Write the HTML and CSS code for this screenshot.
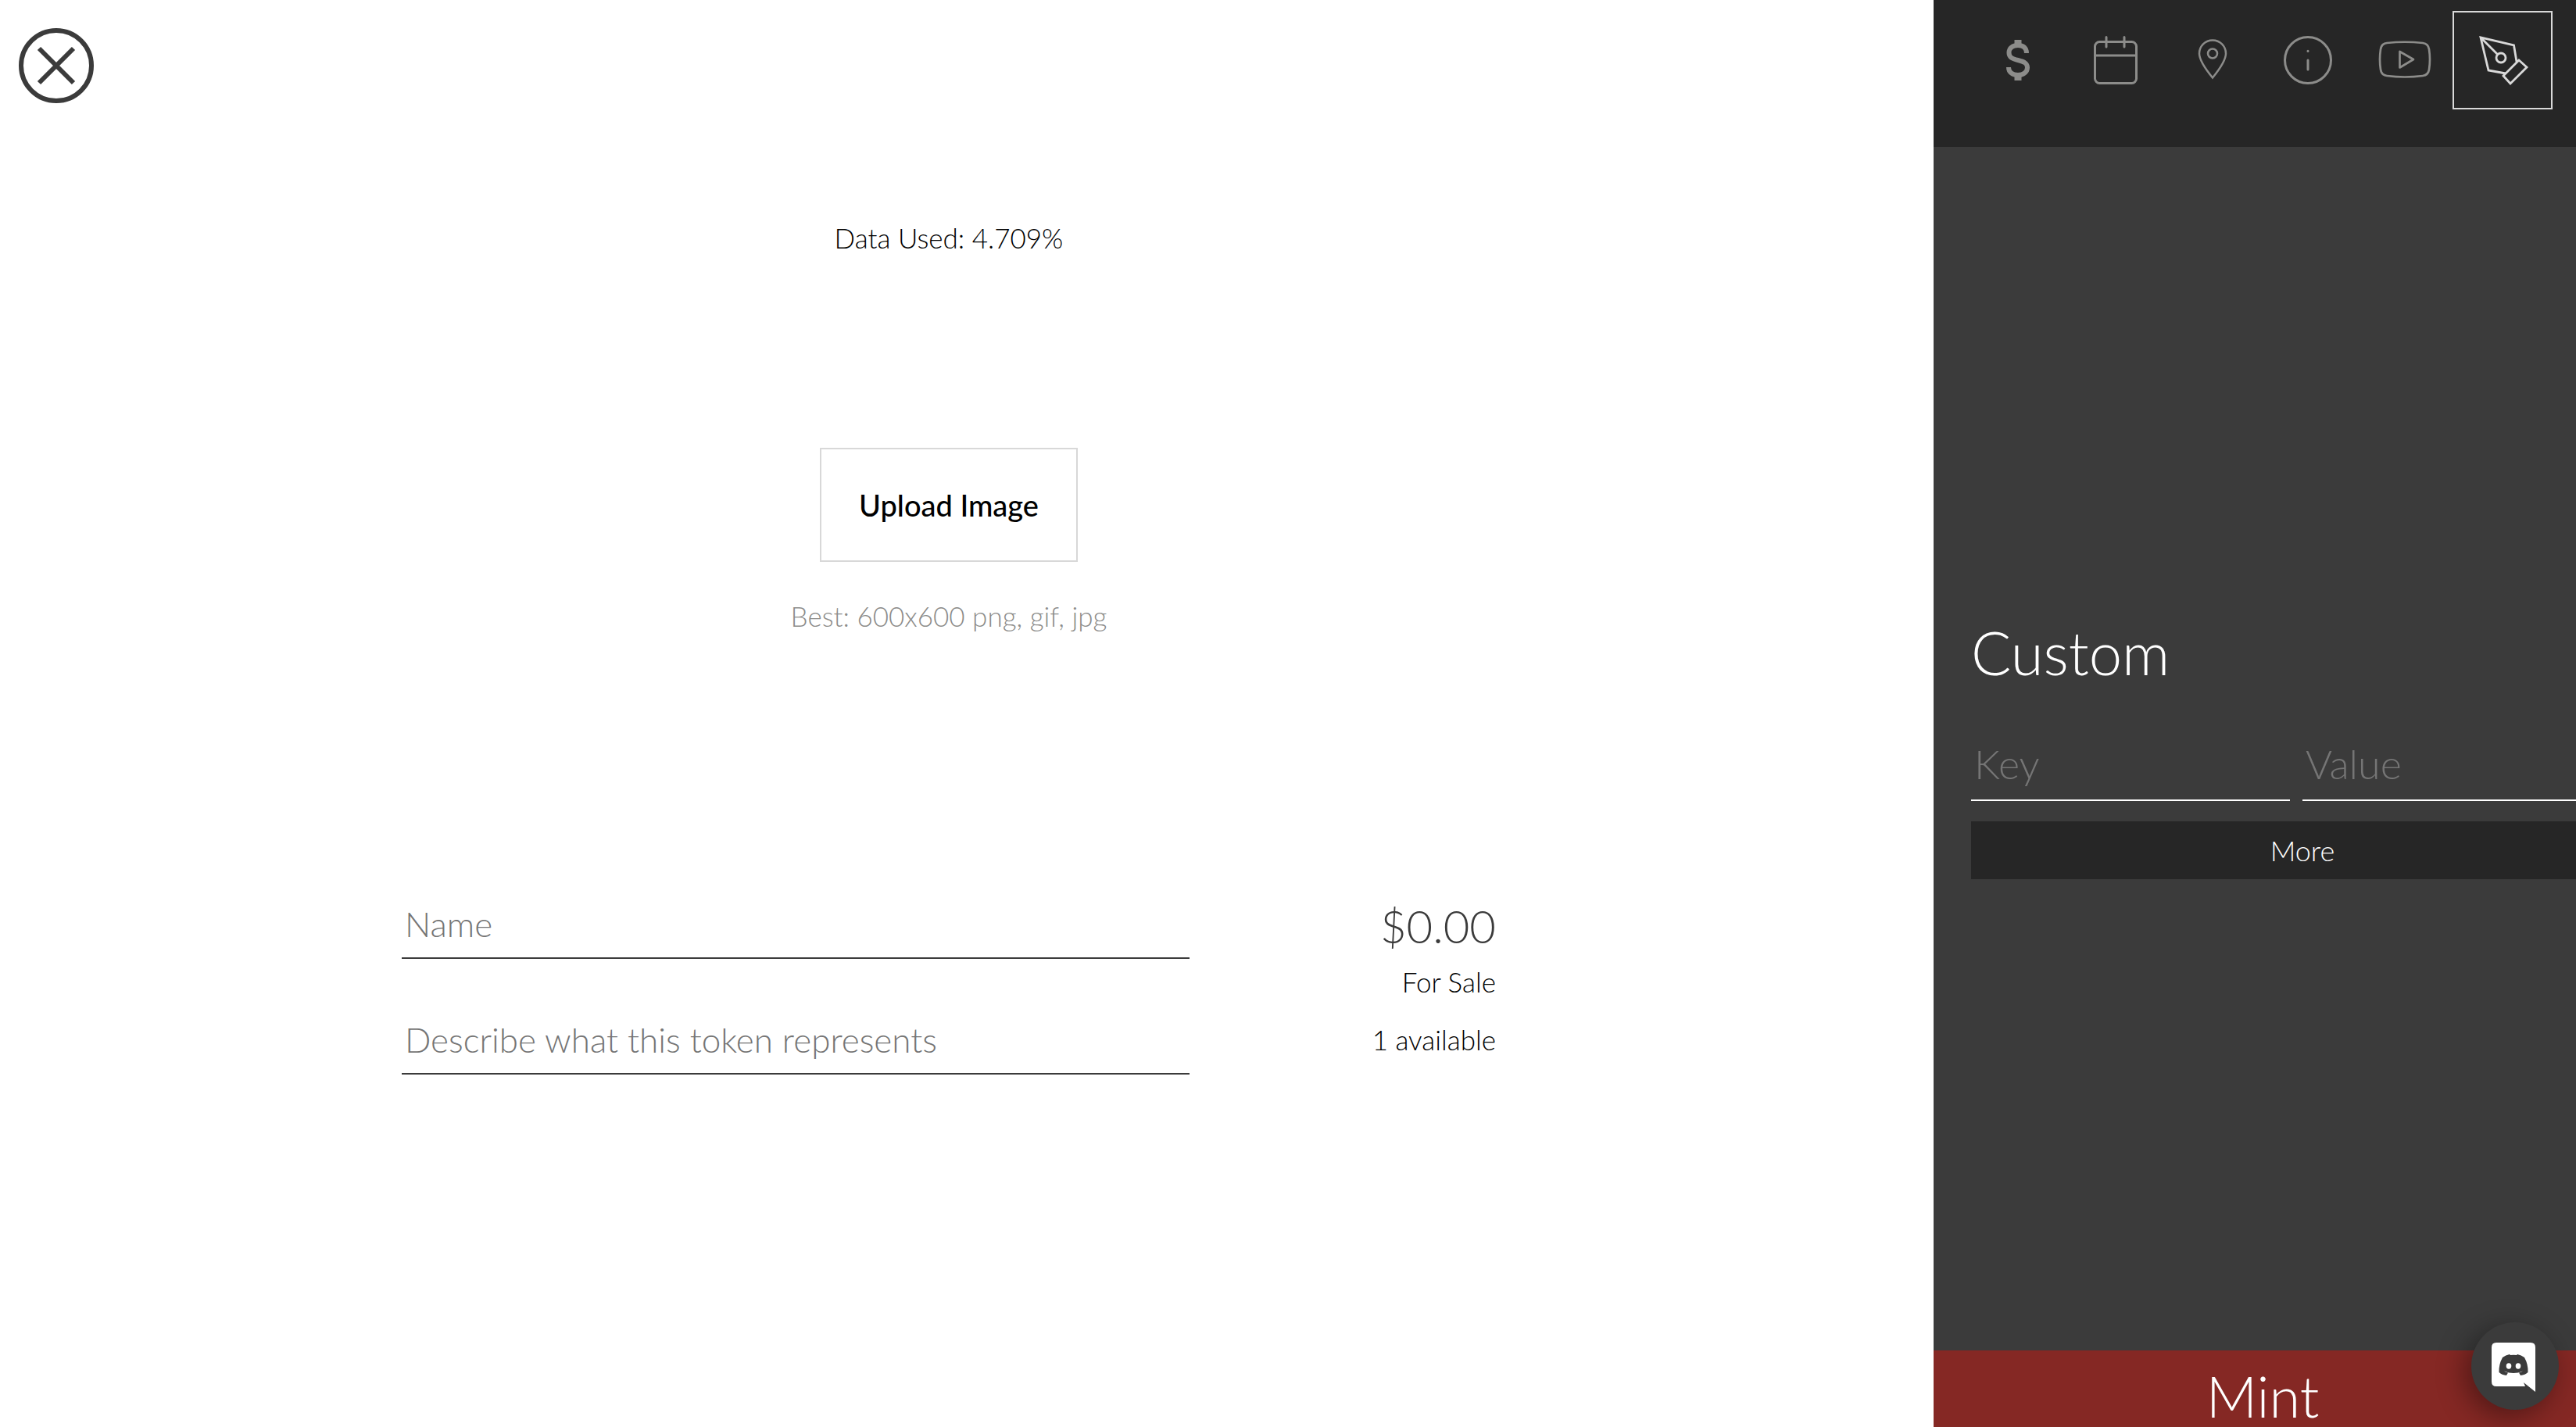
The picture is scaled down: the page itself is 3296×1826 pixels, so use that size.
FILE: index.html
```html
<!DOCTYPE html>
<html lang="en">
<head>
<meta charset="utf-8">
<title>Mint a token</title>
<link rel="stylesheet" href="styles.css">
</head>
<body>
<div class="page">
  <main class="main">
    <button class="close" type="button" aria-label="Close">
      <svg viewBox="0 0 96 96" width="96" height="96" fill="none" stroke="currentColor" stroke-width="6">
        <circle cx="48" cy="48" r="45"/>
        <path d="M26 26 70 70M70 26 26 70"/>
      </svg>
    </button>
    <form class="token">
      <p class="note">Data Used: 4.709%</p>
      <button class="upload" type="button">Upload Image</button>
      <p class="note note-muted">Best: 600x600 png, gif, jpg</p>
      <div class="details">
        <div class="fields">
          <input class="field" type="text" placeholder="Name" aria-label="Name">
          <input class="field" type="text" placeholder="Describe what this token represents" aria-label="Description">
        </div>
        <div class="sale">
          <p class="price">$0.00</p>
          <p class="note">For Sale</p>
          <p class="note stock">1 available</p>
        </div>
      </div>
    </form>
  </main>

  <aside class="sidebar">
    <nav class="tabs">
      <button class="tab" type="button" aria-label="Price">
        <svg viewBox="-42 -40 80 80" fill="none" stroke="currentColor" stroke-width="6">
          <path d="M11-9C11-15.500 7-19 0-19S-11.500-15.500-11.500-9.500C-11.500-4-8-2 0 0S12 4 12 9.500 7 19 0 19-12 15.500-12 9"/>
          <path stroke-width="9" d="M0-26V-17M0 17V26"/>
        </svg>
      </button>
      <button class="tab" type="button" aria-label="Date">
        <svg viewBox="-40 -40 80 80" fill="none" stroke="currentColor" stroke-width="3" stroke-linecap="round">
          <rect x="-23.500" y="-23.500" width="53" height="53" rx="6"/>
          <path d="M-23.500-6H29.500M-9-29.500V-17M14-29.500V-17"/>
        </svg>
      </button>
      <button class="tab" type="button" aria-label="Location">
        <svg viewBox="-40 -40 80 80" fill="none" stroke="currentColor" stroke-width="2.500">
          <path d="M3 22.500C-8 9-14-1-14-8.500A17 17 0 0 1 20-8.500C20-1 14 9 3 22.500Z"/>
          <circle cx="3" cy="-8.500" r="6"/>
        </svg>
      </button>
      <button class="tab" type="button" aria-label="Info">
        <svg viewBox="-40 -40 80 80" fill="none" stroke="currentColor" stroke-width="3" stroke-linecap="round">
          <circle cx="1" cy="0" r="29.500"/>
          <path d="M1 0V12M1-11.700V-11.500"/>
        </svg>
      </button>
      <button class="tab" type="button" aria-label="Video">
        <svg viewBox="-40 -40 80 80" fill="none" stroke="currentColor" stroke-width="2.700" stroke-linejoin="round">
          <path d="M-22-22Q1-24.500 24-22 31-21 32-14 34-1 32 12 31 19 24 20 1 23-22 20-29 19-30 12-32-1-30-14-29-21-22-22Z"/>
          <path d="M-5.500-11V9.500L12-1Z"/>
        </svg>
      </button>
      <button class="tab tab-active" type="button" aria-label="Custom">
        <svg viewBox="-40 -40 80 80" fill="none" stroke="currentColor" stroke-width="2.800">
          <path d="M18 2 14.500-19-28-29-18 13 4 17M-28-29-6-7"/>
          <circle cx="-2" cy="-3" r="6"/>
          <path d="M21 0 31 9 10 30 1 20Z"/>
        </svg>
      </button>
    </nav>
    <section class="custom">
      <h1 class="title">Custom</h1>
      <div class="pair">
        <input class="field field-dark" type="text" placeholder="Key" aria-label="Key">
        <input class="field field-dark" type="text" placeholder="Value" aria-label="Value">
      </div>
      <button class="more" type="button">More</button>
    </section>
    <button class="mint" type="button">Mint</button>
  </aside>
</div>
<button class="chat" type="button" aria-label="Open chat">
  <svg viewBox="0 0 56 64" width="56" height="64">
    <path fill="#fff" d="M6 0H50Q56 0 56 6V63L41 51 43 56H6Q0 56 0 50V6Q0 0 6 0Z"/>
    <path fill="#3b3b3b" d="M14 19Q18 16 23 15L24 16Q28 15.500 32 16L33 15Q38 16 42 19 47 28 46.500 38 43 41.500 37 42L35 38.500Q38 38 40 36.500 28 41.500 16 36.500 18 38 21 38.500L19 42Q13 41.500 9.500 38 9 28 14 19Z"/>
    <ellipse cx="22" cy="30" rx="3.300" ry="3.700" fill="#fff"/>
    <ellipse cx="34" cy="30" rx="3.300" ry="3.700" fill="#fff"/>
  </svg>
</button>
</body>
</html>
```
FILE: styles.css
```css
* {
  box-sizing: border-box;
}

body {
  margin: 0;
  font-family: Lato, "Liberation Sans", sans-serif;
  font-weight: 300;
  color: #000;
  background: #fff;
}

button,
input {
  margin: 0;
  padding: 0;
  border: 0;
  border-radius: 0;
  background: none;
  font: inherit;
  color: inherit;
}

button {
  cursor: pointer;
}

svg {
  display: block;
}

p,
h1 {
  margin: 0;
  font-weight: 300;
}

.page {
  display: grid;
  grid-template-columns: minmax(0, 1fr) calc(25% - 2px);
  min-height: 100vh;
}

/* Token editor */

.main {
  padding: 36px 46px 36px 0;
}

.close {
  margin-left: 24px;
  color: #3b3b3b;
}

.token {
  display: flex;
  flex-direction: column;
  align-items: center;
  max-width: 1400px;
  margin: 145px auto 0;
}

.note {
  font-size: 35px;
  line-height: 48px;
}

.note-muted {
  color: #8c8c8a;
}

.upload {
  margin: 245px 0 45px;
  padding: 0 48px;
  border: 2px solid #d8d8d8;
  font-size: 38px;
  font-weight: 500;
  line-height: 142px;
}

.details {
  display: flex;
  justify-content: space-between;
  width: 100%;
  margin-top: 343px;
}

.fields {
  display: flex;
  flex-direction: column;
  gap: 76px;
  width: 72%;
}

.field {
  display: block;
  width: 100%;
  height: 72px;
  padding: 0 4px 16px;
  border-bottom: 2px solid #3b3b3b;
  outline: 0;
  font-size: 44px;
}

.field::placeholder {
  color: #757575;
  opacity: 1;
}

.sale {
  text-align: right;
}

.price {
  margin-bottom: 17px;
  font-size: 58px;
  line-height: 60px;
  color: #3b3b3b;
}

.stock {
  margin-top: 26px;
}

/* Properties sidebar */

.sidebar {
  display: flex;
  flex-direction: column;
  overflow: hidden;
  background: #3b3b3b;
  color: #fff;
}

.tabs {
  display: flex;
  justify-content: flex-end;
  padding: 14px 30px 48px 0;
  background: #262626;
}

.tab {
  display: flex;
  align-items: center;
  justify-content: center;
  width: 124px;
  height: 126px;
  color: #8c8c8a;
}

.tab svg {
  width: 80px;
  height: 80px;
}

.tab-active {
  width: 128px;
  border: 2px solid #d9d9d9;
  color: #d9d9d9;
}

.custom {
  display: flex;
  flex: 1;
  flex-direction: column;
  justify-content: center;
  width: 848px;
  margin-left: 48px;
}

.title {
  margin-bottom: 68px;
  font-size: 76px;
  line-height: 88px;
}

.pair {
  display: grid;
  grid-template-columns: 408px 1fr;
  gap: 16px;
  margin-bottom: 26px;
}

.field-dark {
  height: 78px;
  border-color: #fff;
  font-size: 52px;
}

.more {
  background: #262626;
  font-size: 36px;
  line-height: 74px;
}

.mint {
  padding: 18px 0 0 20px;
  background: #852824;
  font-size: 72px;
  line-height: 80px;
}

/* Chat launcher floats over the page */

.chat {
  position: fixed;
  right: 22px;
  bottom: 22px;
  display: flex;
  align-items: center;
  justify-content: center;
  width: 112px;
  height: 112px;
  padding-right: 4px;
  padding-top: 4px;
  border-radius: 50%;
  background: #3b3b3b;
  box-shadow: -8px 8px 36px rgba(0, 0, 0, 0.4);
}
```
